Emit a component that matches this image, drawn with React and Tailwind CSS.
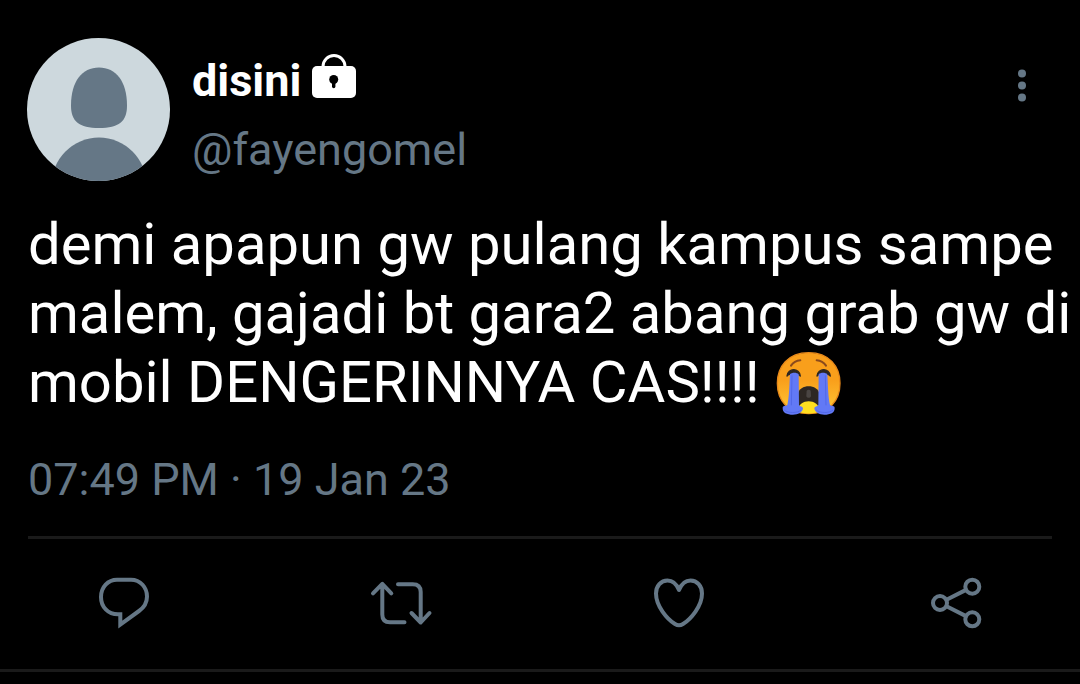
const Avatar = () => (
  <svg viewBox="0 0 143 143" className="size-[143px] shrink-0 rounded-full" role="img" aria-label="Profile picture">
    <rect width="143" height="143" fill="#cdd8dd" />
    <path
      d="M72 29.500c17 0 28 14 28 38 0 16-8 22.500-28 22.500s-28-6.500-28-22.500c0-24 11-38 28-38z"
      fill="#657786"
    />
    <circle cx="72" cy="147" r="47.4" fill="#657786" />
  </svg>
);

const LockIcon = () => (
  <svg viewBox="0 0 44 44" className="mt-2 size-11 shrink-0" role="img" aria-label="Protected account">
    <path d="M11 14v-1.500a11 11 0 0 1 22 0V14" fill="none" stroke="#fff" strokeWidth="3" />
    <rect y="12" width="44" height="32" rx="5" fill="#fff" />
    <circle cx="21.700" cy="25.500" r="4.500" fill="#000" />
    <path d="M21.700 26v6.500" stroke="#000" strokeWidth="3.400" strokeLinecap="round" />
  </svg>
);

const CryingEmoji = () => (
  <svg
    viewBox="0 0 198 198"
    className="ml-0.5 inline-block size-[66px] align-bottom"
    role="img"
    aria-label="Loudly crying face"
  >
    <defs>
      <linearGradient id="skin" x1="0" y1="0" x2="0" y2="1">
        <stop offset="0.45" stopColor="#f99f1b" />
        <stop offset="0.75" stopColor="#fcb62a" />
        <stop offset="1" stopColor="#fdd03a" />
      </linearGradient>
    </defs>
    <path
      d="M98 5c62 0 94 42 94 92 0 54-34 91-94 91S4 151 4 97C4 47 36 5 98 5z"
      fill="url(#skin)"
      stroke="#e8891a"
      strokeWidth="4"
    />
    <path
      d="M45 44c6-9 15-15 28-16M122 28c13 1 22 7 28 16"
      fill="none"
      stroke="#8a4a1c"
      strokeWidth="6"
      strokeLinecap="round"
    />
    <path
      d="M33 75c3-25 37-25 40 0-7-9-33-9-40 0zM123 75c3-25 37-25 40 0-7-9-33-9-40 0z"
      fill="#2d2723"
      stroke="#2d2723"
      strokeWidth="4"
      strokeLinejoin="round"
    />
    <path d="M66 180V128c4-30 60-30 64 0v52z" fill="#2d2723" />
    <path d="M92 119c3-4 9-4 12 0l1 17c-3 6-11 6-14 0z" fill="#4a4543" />
    <path d="M66 178c2-36 62-36 64 0-8 13-56 13-64 0z" fill="#ffdf20" />
    <path
      d="M42 70c6-6 20-6 26 0l1 92c2 5 12 4 12 10-1 12-15 19-30 19-18 0-32-6-31-21 0-7 9-4 14-8 6-24 6-59 8-92z"
      fill="#6279f6"
    />
    <path
      d="M154 70c-6-6-20-6-26 0l-1 92c-2 5-12 4-12 10 1 12 15 19 30 19 18 0 32-6 31-21 0-7-9-4-14-8-6-24-6-59-8-92z"
      fill="#6279f6"
    />
    <path d="M48 73l-2 90M148 73l2 90" stroke="#5168e8" strokeWidth="3" />
    <path d="M25 177c10 10 40 10 50 0M121 177c10 10 40 10 50 0" fill="none" stroke="#5168e8" strokeWidth="3" />
  </svg>
);

const ACTIONS = [
  {
    label: 'Reply',
    shape: (
      <path
        d="M25 8.700H39C48.500 8.700 55 16.500 55 25.500C55 31.500 52 36.500 47 40L28.300 53.500V43.300H26C16 43.300 9 36 9 26C9 16 16 8.700 25 8.700Z"
        strokeLinejoin="miter"
      />
    ),
  },
  {
    label: 'Retweet',
    shape: (
      <path d="M4 22.300L13.300 12.800L22.300 22.300M13.300 13V43.500Q13.300 51.300 21 51.300H35.500M29 13.200H43.700Q51.700 13.200 51.700 21V51M42.500 42L51.700 51.500L60.500 42" />
    ),
  },
  {
    label: 'Like',
    shape: (
      <path d="M32 19C29.500 13 25.500 9.500 20.500 9.500C14 9.500 9 15 9 22.500C9 35 20 48 28 53C31 54.800 33 54.800 36 53C44 48 55 35 55 22.500C55 15 50 9.500 43.500 9.500C38.500 9.500 34.500 13 32 19Z" />
    ),
  },
  {
    label: 'Share',
    shape: (
      <>
        <circle cx="16" cy="32" r="7" />
        <circle cx="48.300" cy="15.700" r="7" />
        <circle cx="48.300" cy="48.300" r="7" />
        <path d="M22.500 28.700L42 18.900M22.500 35.300L42 45.100" />
      </>
    ),
  },
];

const App = () => {
  return (
    <main className="min-h-screen bg-black font-[Roboto,sans-serif] text-white">
      <article className="border-b-3 border-[#1a1a1a] pt-[38px] pb-[34px]">
        {/* Author */}
        <header className="flex items-start pr-7 pl-[27px]">
          <Avatar />
          <div className="ml-[22px] flex-1 pt-2">
            <div className="flex items-start gap-[11px]">
              <h1 className="text-[45px] leading-[69px] font-bold">disini</h1>
              <LockIcon />
            </div>
            <p className="text-[45px] leading-[69px] text-[#657786]">@fayengomel</p>
          </div>
          <button type="button" aria-label="More options" className="mt-6 px-[26px]">
            <svg viewBox="0 0 8 48" className="h-12 w-2" fill="#657786">
              <circle cx="4" cy="11.500" r="4" />
              <circle cx="4" cy="23.500" r="4" />
              <circle cx="4" cy="35.500" r="4" />
            </svg>
          </button>
        </header>

        <p className="mt-[26px] pr-2 pl-7 text-[58px] leading-[69px]">
          demi apapun gw pulang kampus sampe malem, gajadi bt gara2 abang grab gw di mobil DENGERINNYA
          CAS!!!! <CryingEmoji />
        </p>

        <div className="px-7">
          <p className="mt-[35px] text-[45px] leading-14 text-[#657786]">
            <time dateTime="2023-01-19T19:49">07:49 PM · 19 Jan 23</time>
          </p>

          {/* Actions */}
          <div className="mt-7 flex justify-between border-t-3 border-[#1a1a1a] px-16 pt-8">
            {ACTIONS.map((action) => (
              <button key={action.label} type="button" aria-label={action.label}>
                <svg
                  viewBox="0 0 64 64"
                  className="size-16"
                  fill="none"
                  stroke="#657786"
                  strokeWidth="4"
                  strokeLinecap="round"
                  strokeLinejoin="round"
                >
                  {action.shape}
                </svg>
              </button>
            ))}
          </div>
        </div>
      </article>
    </main>
  );
};

export default App;
